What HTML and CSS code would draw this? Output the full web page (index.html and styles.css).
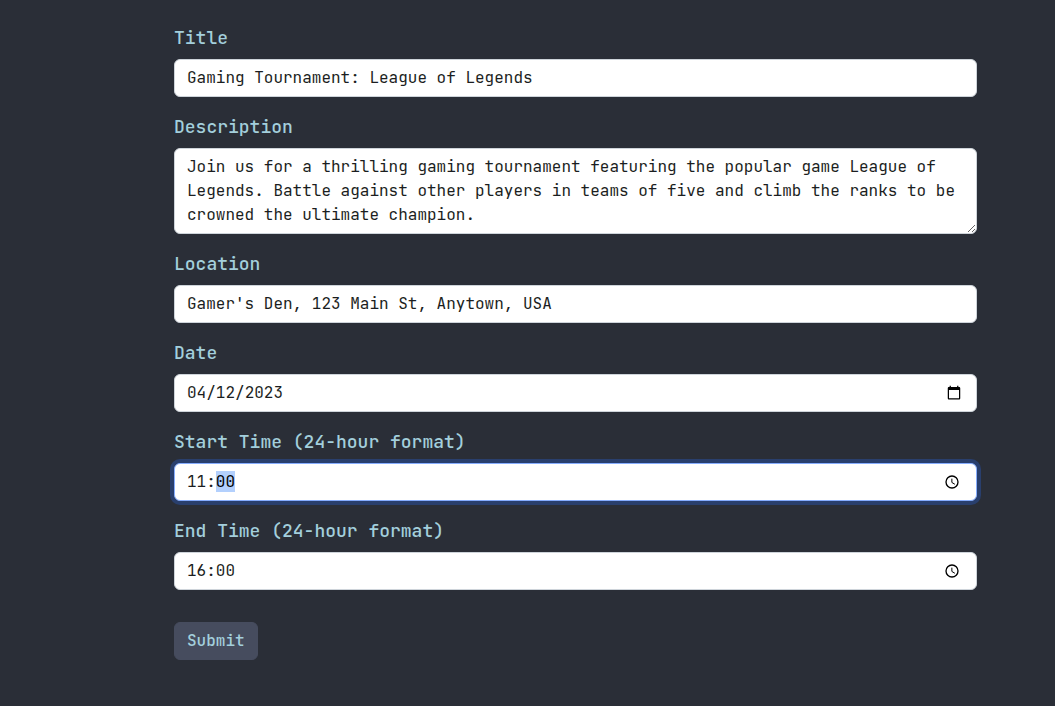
FILE: index.html
```html
<!DOCTYPE html>
<html lang="en">
<head>
<meta charset="utf-8">
<title>Edit event</title>
<link rel="stylesheet" href="styles.css">
</head>
<body>
<main class="page">
  <form class="event-form">
    <div class="field">
      <label class="label" for="title">Title</label>
      <input class="control" id="title" type="text" value="Gaming Tournament: League of Legends">
    </div>
    <div class="field">
      <label class="label" for="description">Description</label>
      <textarea class="control" id="description" rows="3" spellcheck="false">Join us for a thrilling gaming tournament featuring the popular game League of Legends. Battle against other players in teams of five and climb the ranks to be crowned the ultimate champion.</textarea>
    </div>
    <div class="field">
      <label class="label" for="location">Location</label>
      <input class="control" id="location" type="text" value="Gamer's Den, 123 Main St, Anytown, USA">
    </div>
    <div class="field">
      <label class="label" for="date">Date</label>
      <input class="control" id="date" type="date" value="2023-04-12">
    </div>
    <div class="field">
      <label class="label" for="start">Start Time (24-hour format)</label>
      <div class="time">
        <input class="control" id="start" type="text" inputmode="numeric" value="11:00">
        <svg class="clock" viewBox="0 0 24 24" aria-hidden="true"><circle cx="12" cy="12" r="9"/><path class="hands" d="M11.800 7v5.700l4.500 2.700"/></svg>
      </div>
    </div>
    <div class="field">
      <label class="label" for="end">End Time (24-hour format)</label>
      <div class="time">
        <input class="control" id="end" type="text" inputmode="numeric" value="16:00">
        <svg class="clock" viewBox="0 0 24 24" aria-hidden="true"><circle cx="12" cy="12" r="9"/><path class="hands" d="M11.800 7v5.700l4.500 2.700"/></svg>
      </div>
    </div>
    <button class="submit" type="submit">Submit</button>
  </form>
</main>
<script src="form.js"></script>
</body>
</html>
```
FILE: styles.css
```css
* {
  box-sizing: border-box;
}

body {
  margin: 0;
  background: #2a2e37;
  color: #212529;
  font: 16px/24px "JetBrains Mono", "DejaVu Sans Mono", "Liberation Mono", monospace;
}

.page {
  padding: 24px 78px 46px 174px;
}

.event-form {
  display: flex;
  flex-direction: column;
  align-items: flex-start;
  gap: 16px;
}

.field {
  display: flex;
  flex-direction: column;
  gap: 8px;
  width: 100%;
}

.label {
  color: #a3cfdc;
  font-size: 18px;
  font-weight: 500;
  line-height: 27px;
}

.control {
  display: block;
  width: 100%;
  margin: 0;
  padding: 6px 12px;
  border: 1px solid #ced4da;
  border-radius: 6px;
  background: #fff;
  color: #1b1e21;
  font: inherit;
  outline: 0;
}

input.control {
  height: 38px;
}

input.control[type="text"] {
  padding: 5px 12px 7px;
}

textarea.control {
  resize: vertical;
  overflow: auto;
}

.control:focus {
  border-color: #86adfe;
  box-shadow: 0 0 0 4px #293f6d;
}

.control::selection {
  background: #b3d0fd;
  color: #000;
}

.control::-webkit-datetime-edit,
.control::-webkit-datetime-edit-fields-wrapper,
.control::-webkit-datetime-edit-month-field,
.control::-webkit-datetime-edit-day-field,
.control::-webkit-datetime-edit-year-field {
  padding: 0;
}

.time {
  position: relative;
}

.clock {
  position: absolute;
  top: 11px;
  right: 17px;
  width: 16px;
  height: 16px;
  fill: none;
  stroke: #000;
  stroke-width: 2;
}

.hands {
  stroke-width: 1.5;
}

.submit {
  margin-top: 16px;
  padding: 6px 12px;
  border: 1px solid #464c5e;
  border-radius: 6px;
  background: #464c5e;
  color: #a3cfdc;
  font: inherit;
  font-weight: 500;
}
```
FILE: form.js
```js
const start = document.getElementById("start");
start.focus();
start.setSelectionRange(3, 5);
```
